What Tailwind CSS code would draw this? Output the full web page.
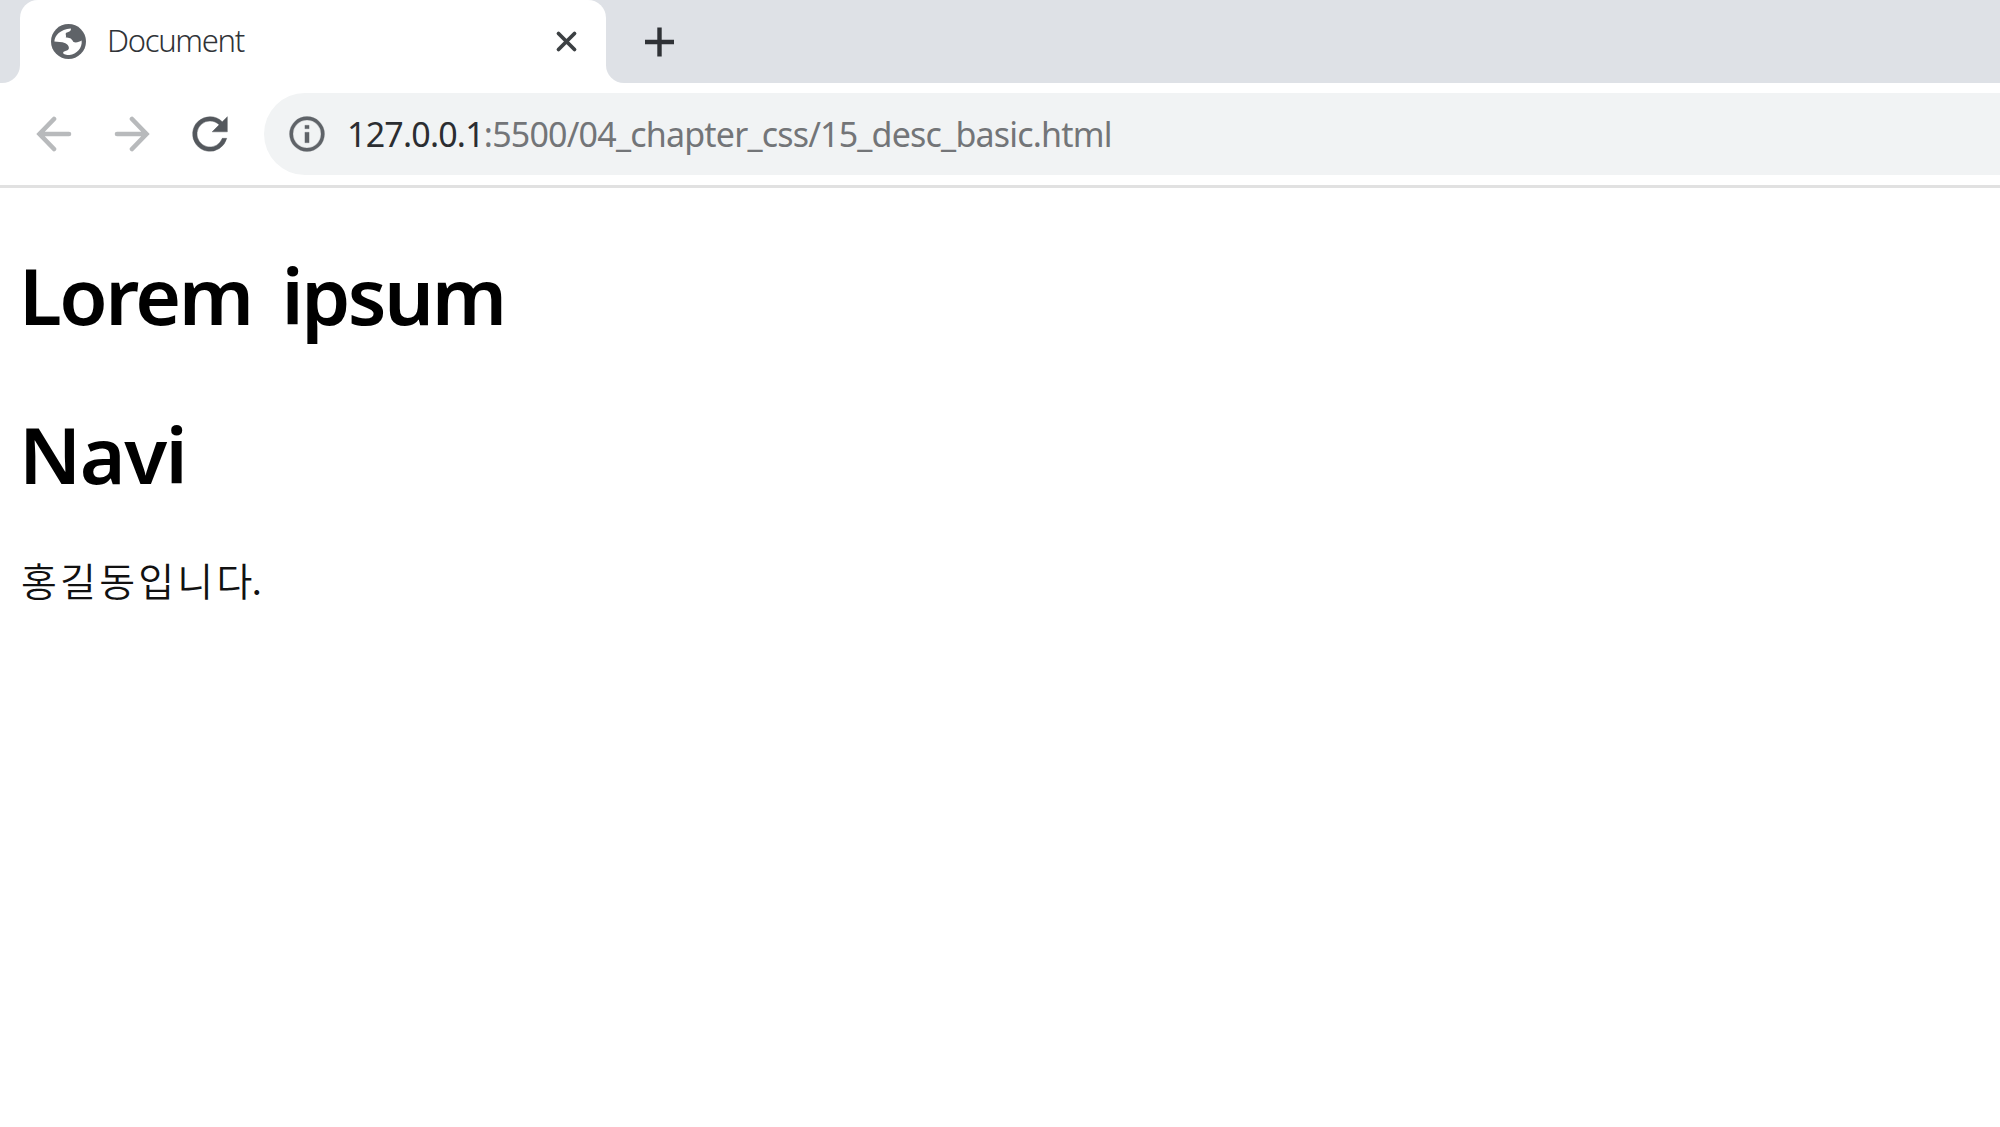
<!DOCTYPE html>
<html lang="ko">
<head>
    <meta charset="UTF-8">
    <meta name="viewport" content="width=device-width, initial-scale=1.0">
    <title>Document</title>
    <script src="https://cdn.jsdelivr.net/npm/@tailwindcss/browser@4"></script>
</head>
<body class="h-screen overflow-hidden bg-white font-['Noto_Sans','Noto_Sans_CJK_KR',sans-serif]">

    <!-- tab strip -->
    <div class="flex h-[83px] bg-white">
        <div class="w-5 rounded-br-[18px] bg-[#dee1e6]"></div>
        <div class="w-[586px] bg-[#dee1e6]">
            <div class="flex h-full items-center rounded-t-[18px] bg-white pl-[31px] pr-[26px]">
                <svg class="size-[35px]" viewBox="153 71 104 104">
                    <circle cx="205" cy="123" r="52" fill="#5f6368"/>
                    <path d="M163 123C164 104 180 87 212 84C214 91 206 94 198 97C194 101 200 106 197 111C206 111 215 113 219 124C227 128 237 124 244 120C247 142 229 161 208 163C199 163 190 161 189 157C190 150 205 152 206 144C208 136 200 128 187 125Z" fill="#fff"/>
                </svg>
                <span class="mb-[3px] ml-[21px] text-[31px] font-light leading-none tracking-[-1.300px] text-[#303337]">Document</span>
                <svg class="ml-auto size-[26px]" viewBox="0 0 26 26" fill="none" stroke="#3c4043" stroke-width="3.8" stroke-linecap="round">
                    <path d="M4.500 4.500l16 16M20.500 4.500l-16 16"/>
                </svg>
            </div>
        </div>
        <div class="flex flex-1 items-center rounded-bl-[18px] bg-[#dee1e6] pl-[38px]">
            <svg class="size-[30px]" viewBox="0 0 30 30" fill="none" stroke="#2f3236" stroke-width="4.4">
                <path d="M15.500 0.5v29M1 15h29"/>
            </svg>
        </div>
    </div>

    <!-- toolbar -->
    <div class="flex h-[105px] items-center border-b-[3px] border-[#e1e1e1] pl-[36px]">
        <svg class="size-9" viewBox="0 0 36 36" fill="none" stroke="#b8babc" stroke-width="4.6" stroke-linecap="round">
            <path d="M33 18H4M18 3L3.500 18L18 33"/>
        </svg>
        <svg class="ml-[42px] size-9" viewBox="0 0 36 36" fill="none" stroke="#b8babc" stroke-width="4.6" stroke-linecap="round">
            <path d="M3 18H32M18 3L32.500 18L18 33"/>
        </svg>
        <svg class="ml-[34px] size-[52px]" viewBox="0 0 24 24" fill="#54585d" stroke="#54585d" stroke-width=".2">
            <path d="M17.65 6.35A7.96 7.96 0 0 0 12 4a8 8 0 1 0 7.730 10h-2.080A6 6 0 1 1 12 6c1.660 0 3.140.69 4.220 1.780L13 11h7V4z"/>
        </svg>
        <div class="ml-7 flex h-[82px] flex-1 items-center rounded-l-full bg-[#f1f3f4] pl-[22px]">
            <svg class="size-[42px]" viewBox="0 0 24 24" fill="#5f6368" stroke="#5f6368" stroke-width=".15">
                <path d="M10.800 7h2.400v2h-2.400zM10.800 11h2.400v6h-2.400zM12 2a10 10 0 1 0 0 20 10 10 0 0 0 0-20zm0 18a8 8 0 1 1 0-16 8 8 0 0 1 0 16z"/>
            </svg>
            <span class="ml-[19px] whitespace-nowrap text-[34px] leading-none tracking-[-0.800px] text-[#737578]"><span class="text-[#2b2d31]">127.0.0.1</span>:5500/04_chapter_css/15_desc_basic.html</span>
        </div>
    </div>

    <!-- page content -->
    <main class="px-5 pt-[54px] text-black">
        <h1 class="-ml-px text-[78.500px] font-semibold leading-[106px] tracking-[-2.500px] [word-spacing:12px]">Lorem ipsum</h1>
        <h1 class="-ml-px mt-[53px] text-[78.500px] font-semibold leading-[106px] tracking-[-1.500px]">Navi</h1>
        <p class="mt-[45px] pl-px font-['Noto_Sans_CJK_KR',sans-serif] text-[39px] font-[350] leading-[54px] tracking-[3.200px] text-[#111]">홍길동입니다<span class="-ml-1">.</span></p>
    </main>

</body>
</html>
